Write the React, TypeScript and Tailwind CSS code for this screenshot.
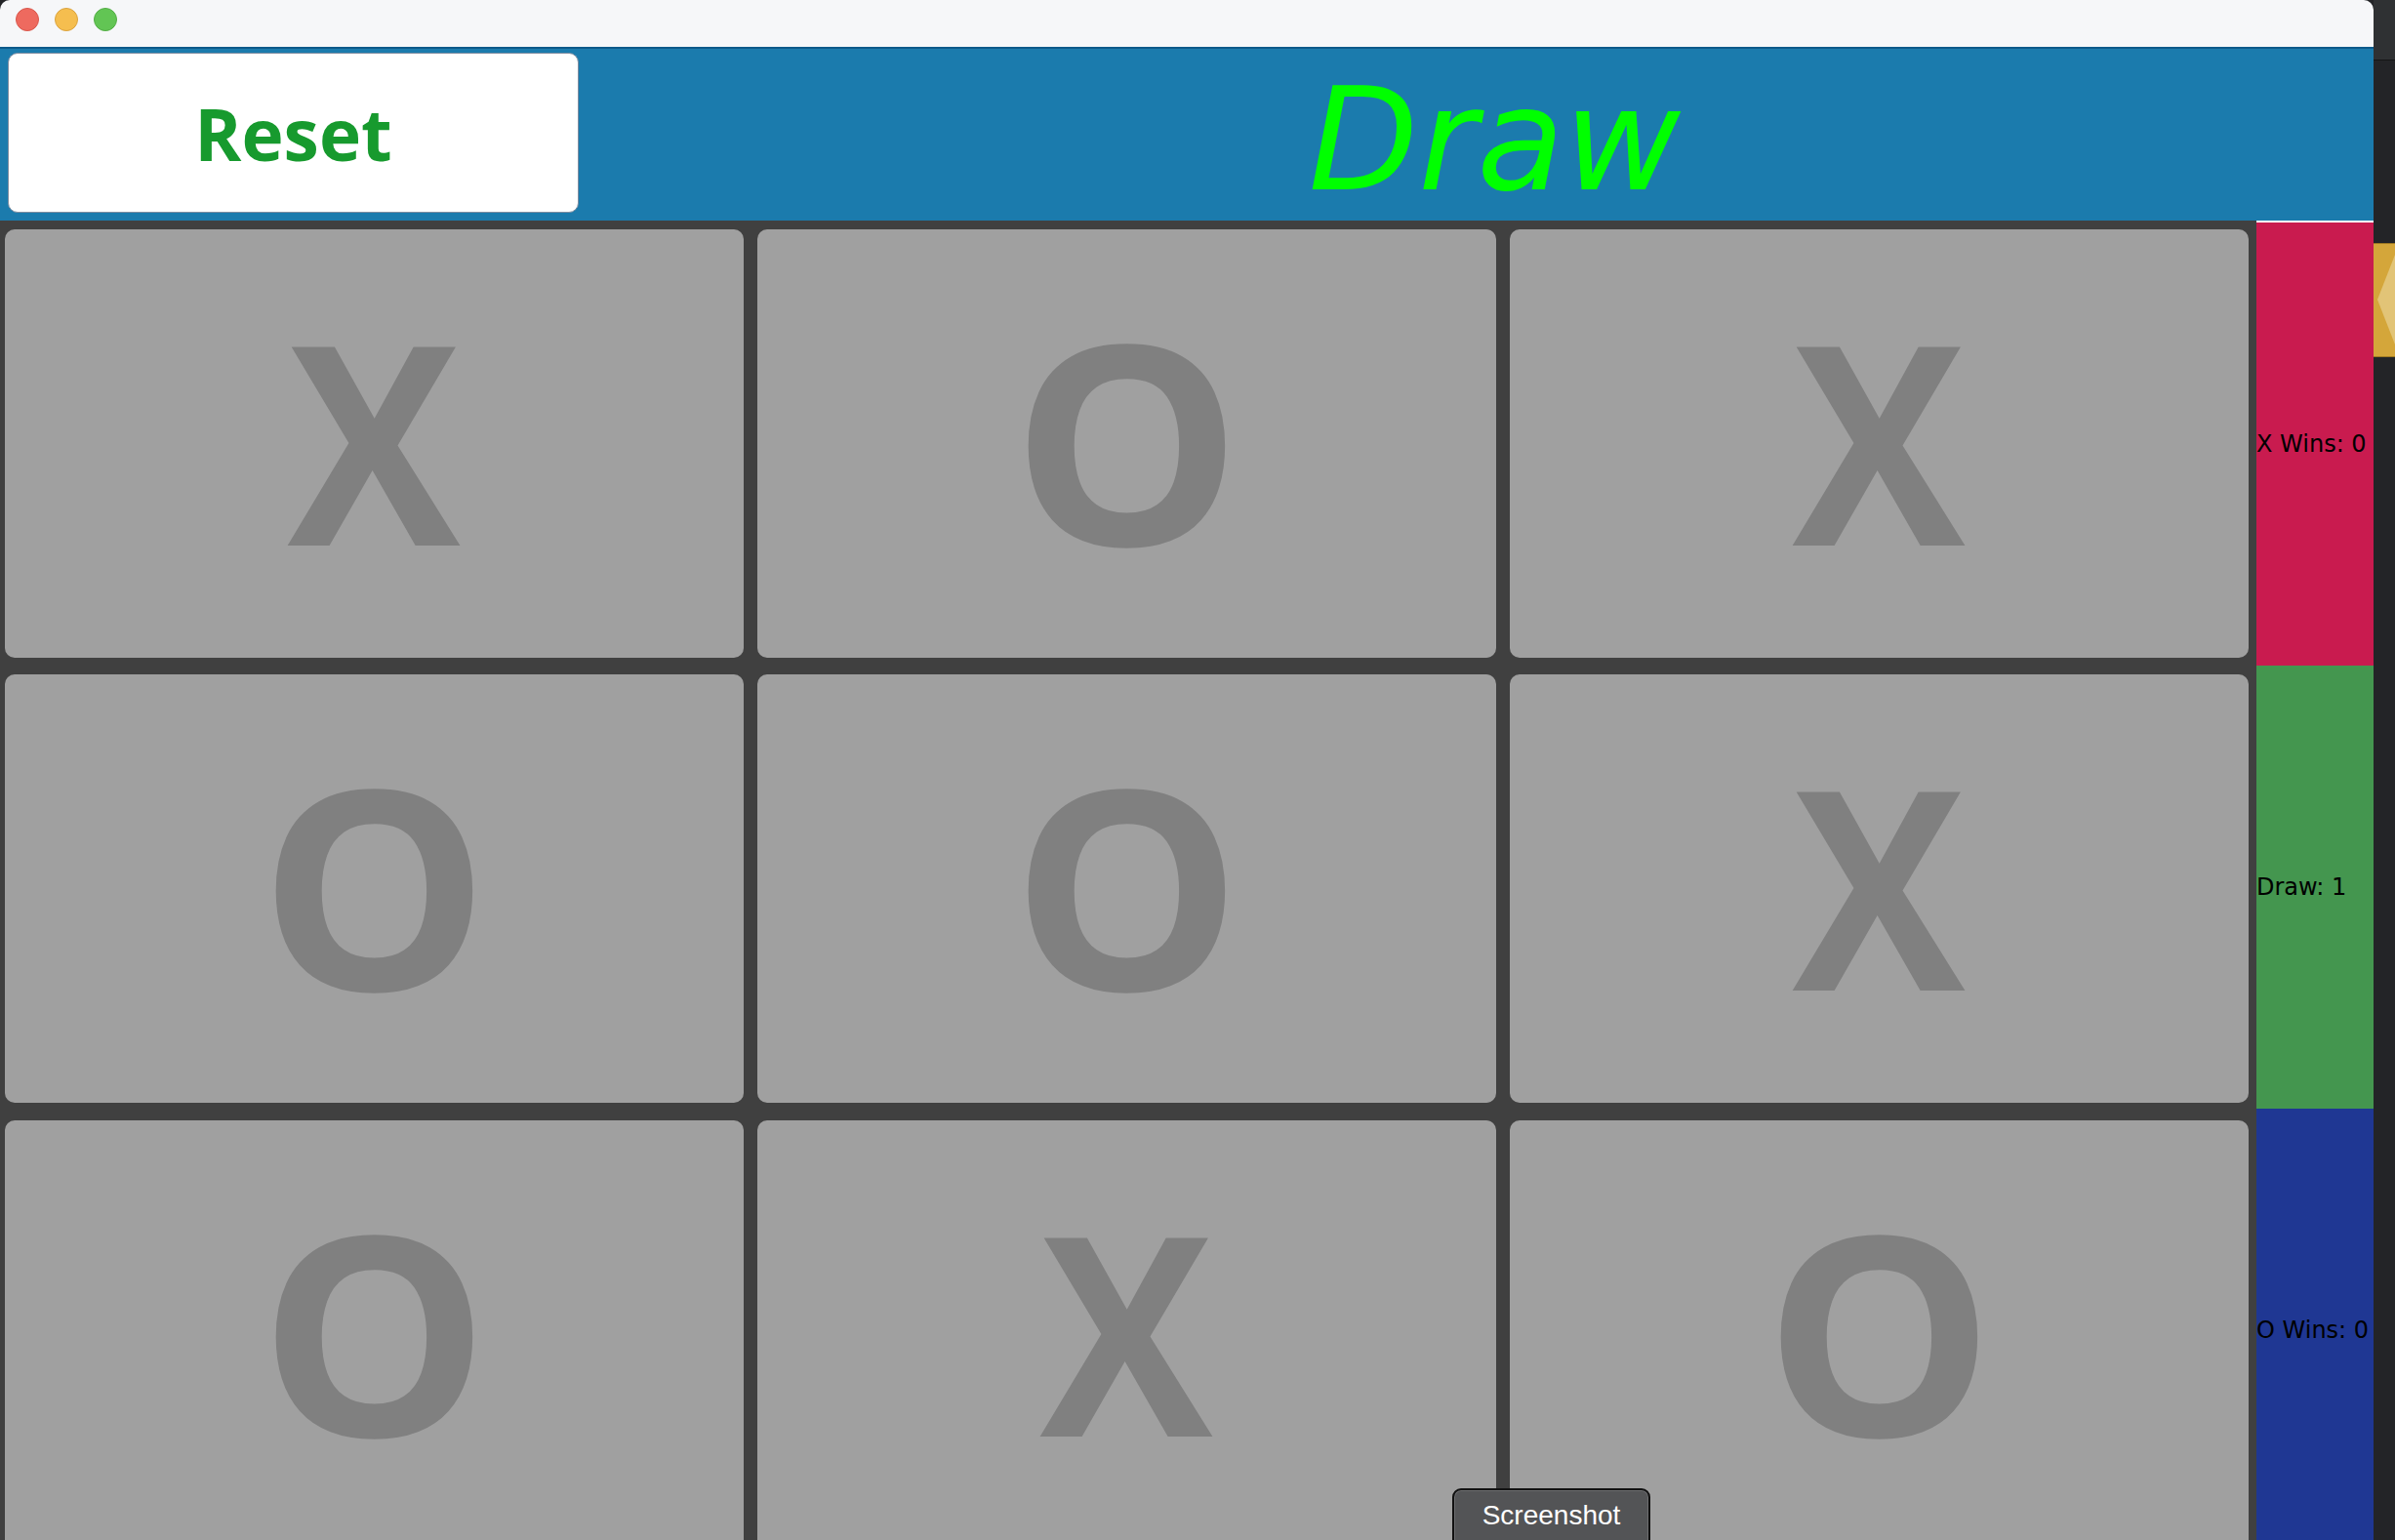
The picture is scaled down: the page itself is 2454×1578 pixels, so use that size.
const cells = ['X', 'O', 'X', 'O', 'O', 'X', 'O', 'X', 'O']

const scores = [
  { label: 'X Wins: 0', bg: 'bg-[#c91b4f]' },
  { label: 'Draw: 1', bg: 'bg-[#44964f]' },
  { label: 'O Wins: 0', bg: 'bg-[#1f3793]' },
]

function TitleBar() {
  return (
    <div className="flex h-[48px] shrink-0 items-start gap-[16px] rounded-tl-[10px] rounded-tr-[10px] bg-[#f6f7f9] pl-[16px] pt-[8px]">
      <span className="h-[24px] w-[24px] rounded-full border border-[#d9574c] bg-[#ee6a5f]" />
      <span className="h-[24px] w-[24px] rounded-full border border-[#dba33e] bg-[#f5be4f]" />
      <span className="h-[24px] w-[24px] rounded-full border border-[#52ad45] bg-[#62c554]" />
    </div>
  )
}

function Header() {
  return (
    <div className="flex h-[178px] shrink-0 items-center border-t-2 border-[#0d5a8a] bg-[#1b7bad]">
      <button className="ml-[8px] mb-[4px] flex h-[164px] w-[585px] items-center justify-center rounded-[10px] border border-[#7f8da0] bg-white">
        <span className="font-['Open_Sans',sans-serif] text-[73px] font-bold leading-none text-[#179a2e]">
          Reset
        </span>
      </button>
      <div className="flex flex-1 justify-center pl-[38px] pt-[10px]">
        <span className="font-['DejaVu_Sans',sans-serif] text-[146px] italic leading-none text-[#00ff00]">
          Draw
        </span>
      </div>
    </div>
  )
}

function Board() {
  return (
    <div className="grid w-[2312px] grid-cols-3 gap-[14px] bg-[#404040] pl-[5px] pr-[8px] pt-[9px]">
      {cells.map((c, i) => (
        <div
          key={i}
          className="flex h-[439px] items-center justify-center rounded-[10px] bg-[#a0a0a0] pb-[12px]"
        >
          <span
            className={`font-['Open_Sans',sans-serif] text-[285px] font-bold leading-none text-[#808080] ${
              c === 'X' ? 'scale-x-[0.93]' : 'scale-x-[1.04]'
            }`}
          >
            {c}
          </span>
        </div>
      ))}
    </div>
  )
}

function ScoreBar() {
  return (
    <div className="flex w-[120px] flex-col border-t-2 border-white">
      {scores.map((s) => (
        <div
          key={s.label}
          className={`flex h-[454px] shrink-0 items-center overflow-hidden whitespace-nowrap ${s.bg}`}
        >
          <span className="font-['DejaVu_Sans',sans-serif] text-[24px] leading-none text-black">
            {s.label}
          </span>
        </div>
      ))}
    </div>
  )
}

export default function App() {
  return (
    <div className="relative flex h-[1578px] w-[2454px] overflow-hidden bg-[#232427]">
      <div className="flex w-[2432px] shrink-0 flex-col">
        <TitleBar />
        <Header />
        <div className="flex shrink-0">
          <Board />
          <ScoreBar />
        </div>
      </div>

      {/* desktop peeking out on the right */}
      <div className="flex flex-1 flex-col">
        <div className="h-[62px] shrink-0 border-b border-[#141516] bg-[#2f3133]" />
        <div className="mt-[187px] flex h-[117px] shrink-0 items-center overflow-hidden border-y border-[#a07a22] bg-[#d4a63a]">
          <svg width="22" height="117" viewBox="0 0 22 117">
            <polygon points="22,12 4,58 22,104" fill="#e2c477" />
          </svg>
        </div>
      </div>

      <div className="absolute left-[1488px] top-[1525px] flex h-[66px] w-[203px] items-start justify-center rounded-[9px] border-2 border-[#111] bg-[#535456] pt-[12px] shadow-[inset_0_0_0_1px_#6c6d6f]">
        <span className="font-['Liberation_Sans',sans-serif] text-[28px] leading-none text-white">
          Screenshot
        </span>
      </div>
    </div>
  )
}
